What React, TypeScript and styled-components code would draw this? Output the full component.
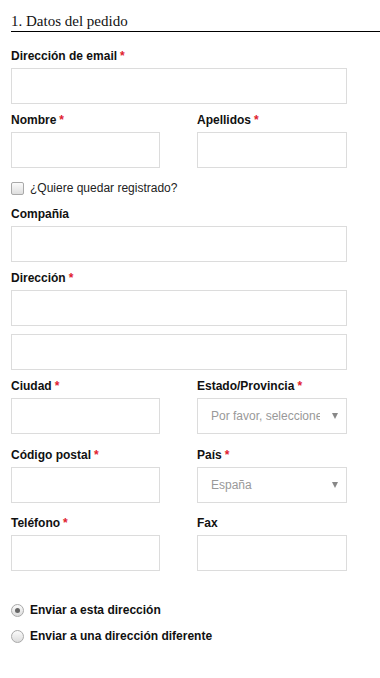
import React from "react";
import styled, { createGlobalStyle } from "styled-components";

const Global = createGlobalStyle`
  html, body { margin: 0; padding: 0; background: #fff; }
  body { font-family: "Liberation Sans", Arial, sans-serif; color: #111; }
`;

const Page = styled.div`
  width: 380px;
  padding: 0 0 20px 11px;
  box-sizing: border-box;
`;

const Heading = styled.h2`
  margin: 11px 0 0;
  font-family: "Liberation Serif", Georgia, serif;
  font-weight: 400;
  font-size: 15px;
  line-height: 20px;
  color: #111;
  border-bottom: 1px solid #000;
`;

const Form = styled.div`
  width: 336px;
  display: flex;
  flex-direction: column;
`;

const Row = styled.div<{ $mt: number }>`
  margin-top: ${(p) => p.$mt}px;
`;

const Cols = styled.div<{ $mt: number }>`
  margin-top: ${(p) => p.$mt}px;
  display: grid;
  grid-template-columns: 149px 150px;
  column-gap: 37px;
`;

const Label = styled.label`
  display: block;
  font-size: 12px;
  font-weight: 700;
  line-height: 16px;
  margin-bottom: 4px;
  color: #111;
`;

const Req = styled.span`
  color: #e0202e;
  margin-left: 3px;
`;

const Input = styled.div<{ $mt?: number }>`
  box-sizing: border-box;
  height: 36px;
  width: 100%;
  border: 1px solid #dcdcdc;
  background: #fff;
  margin-top: ${(p) => p.$mt ?? 0}px;
`;

const Select = styled.div`
  box-sizing: border-box;
  height: 36px;
  width: 100%;
  border: 1px solid #dcdcdc;
  background: #fff;
  display: flex;
  align-items: center;
  padding: 0 6px 0 13px;
  gap: 12px;
`;

const SelectText = styled.span`
  flex: 1;
  overflow: hidden;
  white-space: nowrap;
  font-size: 12px;
  color: #999;
`;

const Arrow = styled.span`
  width: 0;
  height: 0;
  border-left: 3px solid transparent;
  border-right: 3px solid transparent;
  border-top: 6px solid #888;
  margin-right: 2px;
`;

const CheckRow = styled.div<{ $mt: number }>`
  margin-top: ${(p) => p.$mt}px;
  display: flex;
  align-items: center;
  height: 16px;
  gap: 6px;
  font-size: 12px;
  color: #222;
`;

const Box = styled.span`
  box-sizing: border-box;
  width: 13px;
  height: 13px;
  border: 1px solid #a9a9a9;
  border-radius: 2px;
  background: linear-gradient(#fbfbfb, #dedede);
`;

const RadioRow = styled.div<{ $mt: number }>`
  margin-top: ${(p) => p.$mt}px;
  display: flex;
  align-items: center;
  height: 16px;
  gap: 6px;
  font-size: 12px;
  font-weight: 700;
  color: #111;
`;

const Radio = styled.span<{ $on?: boolean }>`
  box-sizing: border-box;
  width: 13px;
  height: 13px;
  border-radius: 50%;
  border: 1px solid #a9a9a9;
  background: linear-gradient(#fbfbfb, #dcdcdc);
  display: flex;
  align-items: center;
  justify-content: center;
  &::after {
    content: "";
    display: ${(p) => (p.$on ? "block" : "none")};
    width: 5px;
    height: 5px;
    border-radius: 50%;
    background: #666;
  }
`;

const Field = ({ label, req }: { label: string; req?: boolean }) => (
  <div>
    <Label>
      {label}
      {req && <Req>*</Req>}
    </Label>
    <Input />
  </div>
);

const SelectField = ({ label, value }: { label: string; value: string }) => (
  <div>
    <Label>
      {label}
      <Req>*</Req>
    </Label>
    <Select>
      <SelectText>{value}</SelectText>
      <Arrow />
    </Select>
  </div>
);

export default function App() {
  return (
    <Page>
      <Global />
      <Heading>1. Datos del pedido</Heading>
      <Form>
        <Row $mt={16}>
          <Field label="Dirección de email" req />
        </Row>
        <Cols $mt={8}>
          <Field label="Nombre" req />
          <Field label="Apellidos" req />
        </Cols>
        <CheckRow $mt={12}>
          <Box />
          ¿Quiere quedar registrado?
        </CheckRow>
        <Row $mt={10}>
          <Field label="Compañía" />
        </Row>
        <Row $mt={8}>
          <Label>
            Dirección<Req>*</Req>
          </Label>
          <Input />
          <Input $mt={8} />
        </Row>
        <Cols $mt={8}>
          <Field label="Ciudad" req />
          <SelectField label="Estado/Provincia" value="Por favor, seleccione" />
        </Cols>
        <Cols $mt={13}>
          <Field label="Código postal" req />
          <SelectField label="País" value="España" />
        </Cols>
        <Cols $mt={12}>
          <Field label="Teléfono" req />
          <Field label="Fax" />
        </Cols>
        <RadioRow $mt={31}>
          <Radio $on />
          Enviar a esta dirección
        </RadioRow>
        <RadioRow $mt={10}>
          <Radio />
          Enviar a una dirección diferente
        </RadioRow>
      </Form>
    </Page>
  );
}
